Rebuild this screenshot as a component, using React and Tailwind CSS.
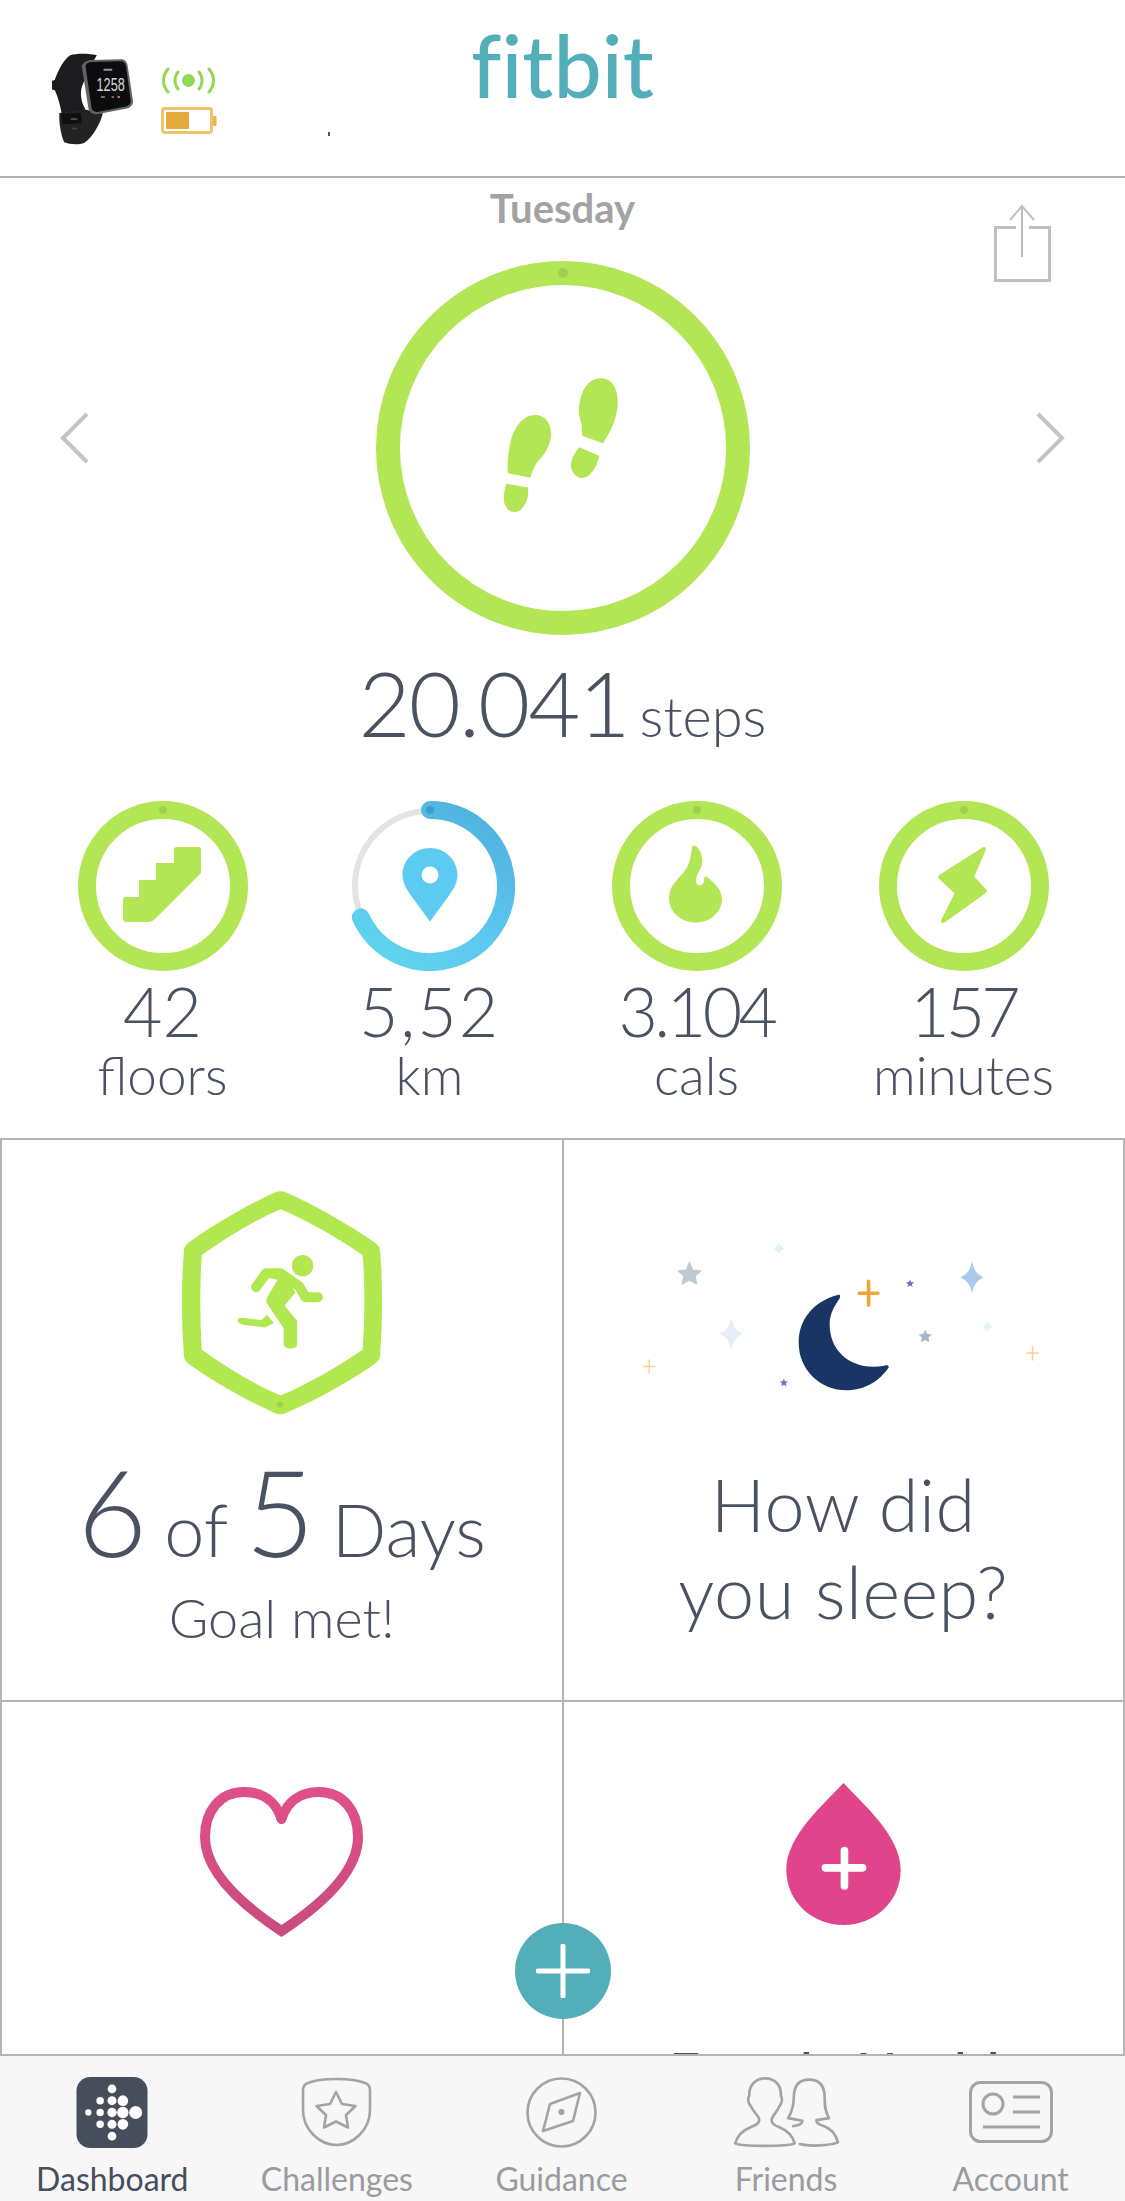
import React from "react";

const GREEN = "#b2e655";

function Watch() {
  return (
    <svg viewBox="60 60 260 290" className="w-[87px] h-[97px] shrink-0">
      <path d="M120 76 C140 70 175 70 200 76 L180 110 L155 170 C150 190 152 215 165 235 L160 250 L95 250 C90 220 80 190 74 180 L66 178 L66 152 L74 150 C85 120 100 90 120 76Z" fill="#1c1c1e" />
      <path d="M88 248 L165 238 L218 250 C208 285 188 320 162 338 C145 344 118 342 102 336 C92 310 86 275 88 248Z" fill="#232325" />
      <path d="M92 250 L152 248 L155 278 L98 282Z" fill="#0f0f10" />
      <rect x="122" y="264" width="20" height="5" fill="#555" />
      <rect x="125" y="292" width="16" height="5" fill="#444" />
      <path d="M155 108 C160 96 172 90 185 90 L272 88 C284 88 290 96 292 106 L308 212 C309 224 302 232 290 235 L200 252 C188 254 178 248 175 236Z" fill="#636366" />
      <path d="M166 108 C168 100 176 96 186 96 L270 94 C280 94 285 100 287 108 L301 210 C302 220 296 227 286 229 L202 245 C192 246 186 241 184 232Z" fill="#0c0c0e" />
      <text transform="translate(199,184) scale(0.95,1.4)" fontSize="40" fill="#d8d8d8" className="font-['Liberation_Sans',sans-serif]">1258</text>
      <rect x="220" y="116" width="26" height="6" fill="#999" />
      <rect x="212" y="198" width="12" height="5" fill="#888" />
      <rect x="244" y="198" width="7" height="5" fill="#d9567f" />
      <rect x="262" y="198" width="7" height="5" fill="#d59b3f" />
    </svg>
  );
}

function Signal() {
  return (
    <svg viewBox="0 0 55 27" className="w-[55px] h-[27px]" fill="none" stroke="#92d857" strokeWidth="3" strokeLinecap="round">
      <circle cx="27.5" cy="13.5" r="6.5" fill="#92d857" stroke="none" />
      <path d="M17 5 C13 10 13 17 17 22" />
      <path d="M38 5 C42 10 42 17 38 22" />
      <path d="M7 2 C1 9 1 18 7 25" />
      <path d="M48 2 C54 9 54 18 48 25" />
    </svg>
  );
}

function Battery() {
  return (
    <svg viewBox="0 0 56 27" className="w-[56px] h-[27px]">
      <rect x="1.5" y="1.5" width="49" height="24" rx="2.5" fill="none" stroke="#f0c36b" strokeWidth="3" />
      <rect x="5" y="5" width="23" height="17" rx="1" fill="#e2a93b" />
      <rect x="52" y="9" width="3.5" height="10" rx="1" fill="#e9b452" />
    </svg>
  );
}

function ShareIcon() {
  return (
    <svg viewBox="0 0 57 78" className="w-[57px] h-[78px]" fill="none" stroke="#bfbfbf">
      <path d="M22 23.5 H1.5 V76.5 H55.5 V23.5 H35" strokeWidth="3" />
      <path d="M28 2 V53" strokeWidth="2" />
      <path d="M16 16 L28 2 L40 16" strokeWidth="2" />
    </svg>
  );
}

function Chevron({ flip }) {
  return (
    <svg viewBox="0 0 30 52" className="w-[30px] h-[52px] mb-[20px]" fill="none" stroke="#c4c4c4" strokeWidth="4">
      <path d={flip ? "M3 2 L27 26 L3 50" : "M27 2 L3 26 L27 50"} />
    </svg>
  );
}

function Feet() {
  return (
    <svg viewBox="490 410 360 415" width="120" height="138" fill={GREEN}>
      <path d="M592 527 C622 527 640 550 640 585 C640 615 622 645 602 665 C592 678 585 692 578 716 L510 702 C508 680 510 650 516 620 C526 565 555 527 592 527Z" />
      <path d="M506 734 L571 745 C574 775 565 800 545 815 C525 825 505 815 499 790 C496 770 500 750 506 734Z" />
      <path d="M790 417 C822 417 841 445 841 490 C841 530 820 580 796 612 L733 590 C732 570 734 555 729 545 C722 525 722 505 728 480 C738 440 760 417 790 417Z" />
      <path d="M725 624 L785 650 C778 685 758 715 735 717 C712 717 698 695 700 675 C702 655 712 640 725 624Z" />
    </svg>
  );
}

function GreenRing({ size, width, dot, children }) {
  const c = size / 2;
  return (
    <svg viewBox={`0 0 ${size} ${size}`} style={{ width: size, height: size }} className="block">
      <circle cx={c} cy={c} r={c - width / 2} fill="none" stroke={GREEN} strokeWidth={width} />
      <circle cx={c} cy={width / 2} r={dot} fill="#9bd24f" />
      {children}
    </svg>
  );
}

function KmRing() {
  return (
    <svg viewBox="0 0 170 170" className="block w-[170px] h-[170px]">
      <defs>
        <linearGradient id="kmGrad" x1="0.8" y1="0" x2="0.2" y2="1">
          <stop offset="0" stopColor="#4fb3de" />
          <stop offset="0.6" stopColor="#5dc8f3" />
          <stop offset="1" stopColor="#5fd3ec" />
        </linearGradient>
      </defs>
      <circle cx="85" cy="85" r="75" fill="none" stroke="#e3e3e3" strokeWidth="6" />
      <path d="M85 9 A76 76 0 1 1 15.8 116.4" fill="none" stroke="url(#kmGrad)" strokeWidth="18" strokeLinecap="round" />
      <circle cx="85" cy="9" r="4" fill="#3f9fc9" />
      <path d="M85 47 C100 47 112.5 59 112.5 74 C112.5 83 107 90 103 96 L85 120.5 L67 96 C63 90 57.5 83 57.5 74 C57.5 59 70 47 85 47Z" fill="#5ccbf1" />
      <circle cx="85" cy="74" r="8.5" fill="#fff" />
    </svg>
  );
}

function Stat({ ring, value, label, spacing }) {
  return (
    <div className="flex flex-col items-center text-[#4a5160]">
      {ring}
      <div className={`text-[68px] leading-[68px] mt-[6px] font-light ${spacing}`}>{value}</div>
      <div className="text-[53px] leading-[54px] mt-[3px] font-light">{label}</div>
    </div>
  );
}

function Hexagon() {
  return (
    <svg viewBox="510 158 565 630" className="w-[202px] h-[229px]">
      <path
        fillRule="evenodd"
        fill="#b2e84f"
        d="M772 165 Q788 158 804 165 C880 198 980 255 1052 305 Q1066 315 1067 330 Q1078 470 1067 620 Q1066 636 1052 645 C980 695 880 750 804 782 Q788 789 772 782 C700 750 600 695 532 645 Q518 636 518 620 Q507 470 518 330 Q518 315 532 305 C600 255 700 198 772 165Z M789 212 C710 245 640 290 568 340 Q560 470 568 605 C640 655 710 700 789 733 C865 700 945 655 1018 605 Q1028 470 1018 340 C945 290 865 245 789 212Z"
      />
      <ellipse cx="787" cy="759" rx="10" ry="8" fill="#9fd24a" />
      <circle cx="850" cy="370" r="30" fill="#b2e84f" />
      <path d="M720 430 L748 391 L788 391 L840 427 L858 458 L893 458" fill="none" stroke="#b2e84f" strokeWidth="28" strokeLinecap="round" strokeLinejoin="round" />
      <path d="M752 392 L800 392 L830 445 L800 482 L835 525 L835 590 C835 605 800 608 797 590 L797 545 L750 475 C747 465 750 460 755 452 L780 410 L755 402Z" fill="#b2e84f" />
      <path d="M683 516 L735 522 L750 507 L770 530 L745 543 L683 535 C662 530 665 514 683 516Z" fill="#b2e84f" />
    </svg>
  );
}

function SleepArt() {
  const star = "M0 -32 L9 -11 L31 -9 L15 5 L20 27 L0 16 L-20 27 L-15 5 L-31 -9 L-9 -11Z";
  const sparkle = "M0 -44 C6 -18 14 -8 33 0 C14 8 6 18 0 44 C-6 18 -14 8 -33 0 C-14 -8 -6 -18 0 -44Z";
  return (
    <svg viewBox="230 300 1110 415" className="w-[400px] h-[151px]">
      <path d="M770 448 C705 465 662 515 662 580 C662 655 722 712 795 712 C845 712 888 685 912 648 C912 642 905 642 900 644 C815 660 748 610 748 530 C748 500 760 480 775 458 C780 450 775 446 770 448Z" fill="#183565" />
      <path d={star} transform="translate(359,390)" fill="#bfc9d4" stroke="#bfc9d4" strokeWidth="4" strokeLinejoin="round" />
      <path d={star} transform="translate(1013,563) scale(0.6)" fill="#aab6c3" />
      <path d={star} transform="translate(971,416) scale(0.36)" fill="#7c6cc4" />
      <path d={star} transform="translate(621,691) scale(0.36)" fill="#7c6cc4" />
      <path d={sparkle} transform="translate(1143,399)" fill="#a9caee" />
      <path d={sparkle} transform="translate(475,556)" fill="#e4eef8" />
      <path d="M607 304 L621 318 L607 332 L594 318Z" fill="#e2f3f3" />
      <path d="M1186 523 L1199 536 L1186 550 L1173 536Z" fill="#e2f3f3" />
      <path d="M856 410 V476 M830 443 H882" stroke="#f0a53a" strokeWidth="10" strokeLinecap="round" />
      <path d="M247 628 V664 M232 646 H263" stroke="#f8d48d" strokeWidth="4" strokeLinecap="round" />
      <path d="M1311 591 V628 M1295 609 H1327" stroke="#f8d48d" strokeWidth="4" strokeLinecap="round" />
    </svg>
  );
}

function Heart() {
  return (
    <svg viewBox="0 0 163 151" className="w-[163px] h-[151px] overflow-visible">
      <defs>
        <linearGradient id="heartGrad" x1="0" y1="0" x2="0" y2="1">
          <stop offset="0" stopColor="#e04f88" />
          <stop offset="1" stopColor="#c94c7e" />
        </linearGradient>
      </defs>
      <path d="M81.5 32 C76 14 62 5 44 5 C20 5 5 24 5 50 C5 85 42 118 81.5 144 C121 118 158 85 158 50 C158 24 143 5 119 5 C101 5 87 14 81.5 32" fill="none" stroke="url(#heartGrad)" strokeWidth="10" strokeLinecap="round" strokeMiterlimit="8" />
    </svg>
  );
}

function Drop() {
  return (
    <svg viewBox="0 0 120 149" className="w-[121px] h-[149px]">
      <path d="M60 0 C80 22 120 55 120 91 C120 124 93 149 60 149 C27 149 0 124 0 91 C0 55 40 22 60 0Z" fill="#e0458c" />
      <path d="M61 71 V108 M41 89 H80" stroke="#fff" strokeWidth="8" strokeLinecap="round" />
    </svg>
  );
}

function FitbitDots() {
  const dots = [
    [36, 12, 4.4], [24, 24, 3.8], [36, 24, 4.6], [47, 24, 5.4],
    [12, 36, 3.2], [24, 36, 3.8], [36, 36, 4.8], [47, 36, 5.8], [60, 36, 6.6],
    [24, 48, 3.8], [36, 48, 4.6], [47, 48, 5.4], [36, 60, 4.4],
  ];
  return (
    <svg viewBox="0 0 72 72" className="w-[72px] h-[71px]">
      <rect width="72" height="72" rx="14" fill="#464e5c" />
      {dots.map(([x, y, r], i) => (
        <circle key={i} cx={x} cy={y} r={r} fill="#fff" />
      ))}
    </svg>
  );
}

function ShieldIcon() {
  return (
    <svg viewBox="0 0 71 70" className="w-[71px] h-[70px]" fill="none" stroke="#a3a3a3" strokeWidth="2.6" strokeLinejoin="round">
      <path d="M35.5 2 C48 2 58 3.5 64 6 C67 7 69 9 69 13 L69 33 C69 53 52 68 35.5 68 C19 68 2 53 2 33 L2 13 C2 9 4 7 7 6 C13 3.5 23 2 35.5 2Z" />
      <path d="M35 15 L41 27 L54.5 29 L45 38 L47 50.5 L35 44.5 L23 50.5 L25 38 L15.5 29 L29 27Z" />
    </svg>
  );
}

function CompassIcon() {
  return (
    <svg viewBox="0 0 71 71" className="w-[71px] h-[71px]" fill="none" stroke="#a3a3a3" strokeWidth="2.6">
      <circle cx="35.5" cy="35.5" r="34" />
      <path d="M54 16 L47 44 L17 54 L24 27Z" strokeLinejoin="round" />
      <circle cx="35.5" cy="35" r="3" fill="#a3a3a3" stroke="none" />
    </svg>
  );
}

function FriendsIcon() {
  return (
    <svg viewBox="220 105 320 220" className="w-[107px] h-[73px]" fill="none" stroke="#a3a3a3" strokeWidth="8" strokeLinejoin="round">
      <path d="M225 308 C232 285 245 270 270 260 C285 254 297 250 298 238 C298 225 280 215 272 195 C265 190 262 170 268 165 C266 135 285 112 316 112 C347 112 365 135 363 165 C369 170 366 190 359 195 C352 215 335 225 335 238 C335 250 345 254 360 260 C385 270 398 285 405 308 C385 318 245 318 225 308Z" />
      <path d="M420 310 C450 318 510 315 535 305 C530 285 520 265 490 255 C475 250 470 245 470 238 L508 232 C495 210 495 190 495 170 C495 135 480 116 448 116 C418 116 402 135 402 170 C402 190 395 215 385 232 L428 240 C428 250 420 254 400 256" strokeLinecap="round" />
    </svg>
  );
}

function AccountIcon() {
  return (
    <svg viewBox="0 0 84 62" className="w-[84px] h-[62px]" fill="none" stroke="#a3a3a3" strokeWidth="3">
      <rect x="1.5" y="1.5" width="81" height="59" rx="10" />
      <circle cx="24" cy="23" r="10" />
      <path d="M44 16 H71 M44 31 H71 M14 46 H71" />
    </svg>
  );
}

function TabItem({ icon, label, active }) {
  return (
    <div className="flex flex-col items-center">
      <div className="h-[74px] flex items-center justify-center">{icon}</div>
      <div className={`text-[32px] leading-[36px] mt-[12px] ${active ? "text-[#464e5c]" : "text-[#999b9e]"}`}>{label}</div>
    </div>
  );
}

export default function App() {
  return (
    <div className="relative w-[1125px] h-[2201px] overflow-hidden bg-white flex flex-col font-['Lato',sans-serif]">
      <header className="h-[178px] shrink-0 border-b-2 border-[#b0b0b0] grid grid-cols-3">
        <div className="flex items-start pl-[50px] pt-[50px] gap-[24px]">
          <Watch />
          <div className="flex flex-col gap-[13px] pt-[17px]">
            <Signal />
            <Battery />
          </div>
          <div className="w-[2px] h-[4px] bg-[#555] mt-[82px] ml-[87px]" />
        </div>
        <div className="text-center text-[#52aeb8] text-[86px] leading-[88px] pt-[21px] font-medium [font-variant-ligatures:none]">fitbit</div>
        <div />
      </header>

      <main className="flex-1 overflow-hidden">
        <section className="relative flex flex-col items-center">
          <div className="pt-[10px] text-[40px] leading-[40px] font-bold text-[#a3a3a3]">Tuesday</div>
          <div className="absolute top-[26px] right-[74px]">
            <ShareIcon />
          </div>
          <div className="w-full mt-[33px] px-[60px] flex items-center justify-between">
            <Chevron />
            <GreenRing size={374} width={24} dot={5}>
              <g transform="translate(125,115)">
                <Feet />
              </g>
            </GreenRing>
            <Chevron flip />
          </div>
        </section>

        <div className="flex items-baseline justify-center gap-[11px] text-[#4a5160] font-light mt-[22px]">
          <span className="text-[90px] leading-[90px] tracking-[-2px]">20.041</span>
          <span className="text-[56px] leading-[50px]">steps</span>
        </div>

        <div className="grid grid-cols-4 pl-[29px] pr-[28px] mt-[54px]">
          <Stat
            value="42"
            label="floors"
            spacing="tracking-normal"
            ring={
              <GreenRing size={170} width={18} dot={4}>
                <path d="M47 96 H61 V79 H78 V62 H96 V49 a3 3 0 0 1 3-3 H120 a3 3 0 0 1 3 3 V72 L77 118 q-3 3 -6 3 H48 a3 3 0 0 1 -3 -3 V98 a2 2 0 0 1 2-2Z" fill={GREEN} />
              </GreenRing>
            }
          />
          <Stat value="5,52" label="km" spacing="tracking-[2px]" ring={<KmRing />} />
          <Stat
            value="3.104"
            label="cals"
            spacing="tracking-[-3.5px]"
            ring={
              <GreenRing size={170} width={18} dot={4}>
                <path d="M80 46 C81 44 83 44 85 46 C90 52 92 60 89 67 C86 71 84 76 84 80 C84 86 92 86 92 79 C92 76 93 74 96 77 C104 83 110 90 110 98 C110 111 98 121.5 84 121.5 C69 121.5 57 111 57 97 C57 85 66 78 72 71 C78 64 79 54 80 46Z" fill={GREEN} />
              </GreenRing>
            }
          />
          <Stat
            value="157"
            label="minutes"
            spacing="tracking-[-4px]"
            ring={
              <GreenRing size={170} width={18} dot={4}>
                <path d="M105 48 L93 76 L106 90 L64 120 L78 92 L61 76Z" fill={GREEN} stroke={GREEN} strokeWidth="4" strokeLinejoin="round" />
              </GreenRing>
            }
          />
        </div>

        <div className="grid grid-cols-2 mt-[36px] border-t-2 border-l-2 border-[#b4b4b4]">
          <div className="h-[562px] border-r-2 border-b-2 border-[#b4b4b4] flex flex-col items-center pt-[48px] text-[#4a5160]">
            <Hexagon />
            <div className="flex items-baseline mt-[34px] font-light gap-[17px]">
              <span className="text-[120px] leading-[120px]">6</span>
              <span className="text-[72px] leading-[72px]">of</span>
              <span className="text-[120px] leading-[120px]">5</span>
              <span className="text-[72px] leading-[72px]">Days</span>
            </div>
            <div className="text-[54px] leading-[60px] font-light mt-[17px]">Goal met!</div>
          </div>
          <div className="h-[562px] border-r-2 border-b-2 border-[#b4b4b4] flex flex-col items-center pt-[101px] text-[#4a5160]">
            <SleepArt />
            <div className="text-[72px] leading-[87px] font-light text-center tracking-[0.5px] mt-[69px]">
              How did
              <br />
              you sleep?
            </div>
          </div>
          <div className="h-[400px] border-r-2 border-[#b4b4b4] flex flex-col items-center pt-[85px]">
            <Heart />
          </div>
          <div className="h-[400px] border-r-2 border-[#b4b4b4] flex flex-col items-center pt-[81px]">
            <Drop />
            <div className="text-[55px] leading-[60px] mt-[117px] font-medium text-[#4a5160]">Female Health</div>
          </div>
        </div>
      </main>

      <nav className="h-[147px] shrink-0 border-t-2 border-[#b4b4b4] bg-[#f7f7f8] grid grid-cols-5 pt-[19px] pr-[2px]">
        <TabItem icon={<FitbitDots />} label="Dashboard" active />
        <TabItem icon={<ShieldIcon />} label="Challenges" />
        <TabItem icon={<CompassIcon />} label="Guidance" />
        <TabItem icon={<FriendsIcon />} label="Friends" />
        <TabItem icon={<AccountIcon />} label="Account" />
      </nav>

      <div className="absolute left-[515px] top-[1923px] w-[96px] h-[96px] rounded-full bg-[#52aeb8] flex items-center justify-center">
        <svg viewBox="0 0 54 54" className="w-[54px] h-[54px]" stroke="#fff" strokeWidth="5" strokeLinecap="round">
          <path d="M27 2 V52 M2 27 H52" />
        </svg>
      </div>
    </div>
  );
}
